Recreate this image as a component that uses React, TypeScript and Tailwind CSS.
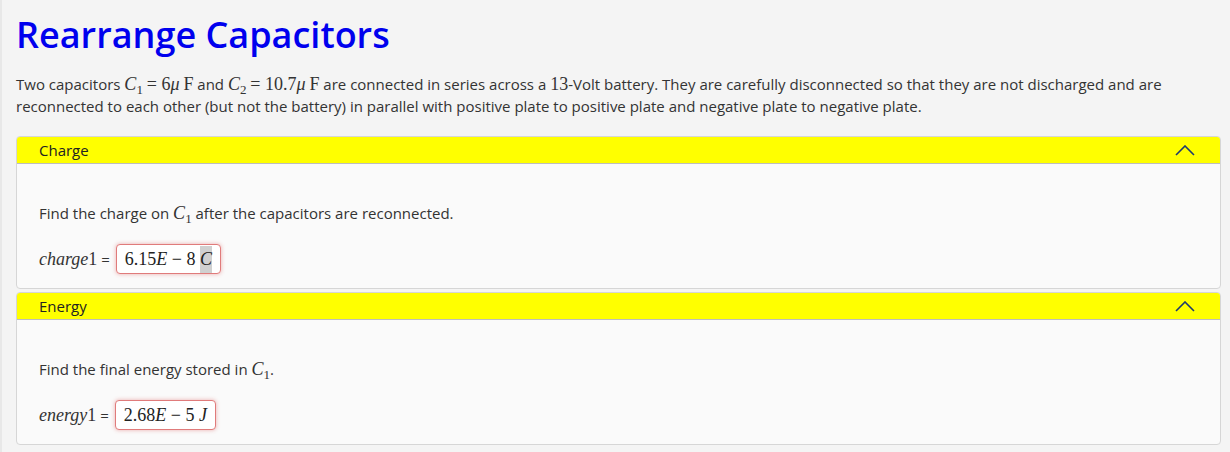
const sans = { fontFamily: '"Open Sans", "Noto Sans", sans-serif' };
const serif = "font-['Liberation_Serif','DejaVu_Serif',serif]";

function M({ children, italic }: { children: React.ReactNode; italic?: boolean }) {
  return <span className={`${serif} text-[18px] ${italic ? "italic" : ""}`}>{children}</span>;
}

function Sub({ children }: { children: React.ReactNode }) {
  return <span className={`${serif} text-[13px] relative top-[4px] leading-none`}>{children}</span>;
}

function Chevron() {
  return (
    <svg width="20" height="11" viewBox="0 0 20 11" className="text-[#1d3a6e]">
      <polyline points="1,10 10,1 19,10" fill="none" stroke="currentColor" strokeWidth="1.6" />
    </svg>
  );
}

function Section({
  title,
  question,
  label,
  answer,
}: {
  title: string;
  question: React.ReactNode;
  label: React.ReactNode;
  answer: React.ReactNode;
}) {
  return (
    <div className="rounded-[4px] border border-[#d6d6d6] bg-[#fafafa] overflow-hidden">
      <div className="h-[27px] bg-[#ffff00] border-b border-[#bdbdbd] flex items-center justify-between pl-[22px] pr-[25px]">
        <span className="text-[15px] text-[#222]">{title}</span>
        <Chevron />
      </div>
      <div className="pl-[22px] pt-[37px] pb-[14px]">
        <p className="text-[15px] text-[#333] leading-[24px]">{question}</p>
        <div className="mt-[19px] flex items-center gap-[6px] text-[15px] text-[#333]">
          <span>{label}</span>
          <div className="h-[30px] px-[8px] flex items-center rounded-[4px] border border-[#e07b7b] bg-white shadow-[0_0_4px_rgba(220,80,80,0.45)] text-[#222]">
            {answer}
          </div>
        </div>
      </div>
    </div>
  );
}

export default function App() {
  return (
    <div className="min-h-[452px] bg-[#f4f4f4] border-l-2 border-[#e8e8e8] pl-[14px] pr-[9px] pt-[12px]" style={sans}>
      <h1 className="text-[36px] leading-[46px] font-semibold text-[#0000ee]">Rearrange Capacitors</h1>
      <p className="mt-[15px] text-[15px] leading-[22px] text-[#333] pr-[40px]">
        Two capacitors <M italic>C</M>
        <Sub>1</Sub> <M>= 6</M>
        <M italic>μ</M> <M>F</M> and <M italic>C</M>
        <Sub>2</Sub> <M>= 10.7</M>
        <M italic>μ</M> <M>F</M> are connected in series across a <M>13</M>-Volt battery. They are carefully
        disconnected so that they are not discharged and are reconnected to each other (but not the battery) in
        parallel with positive plate to positive plate and negative plate to negative plate.
      </p>
      <div className="mt-[19px] flex flex-col gap-[3px]">
        <Section
          title="Charge"
          question={
            <>
              Find the charge on <M italic>C</M>
              <Sub>1</Sub> after the capacitors are reconnected.
            </>
          }
          label={
            <>
              <M italic>charge</M>
              <M>1</M> =
            </>
          }
          answer={
            <>
              <M>6.15</M>
              <M italic>E</M>
              <M>&nbsp;− 8&nbsp;</M>
              <span className="bg-[#d0d0d0]">
                <M italic>C</M>
              </span>
            </>
          }
        />
        <Section
          title="Energy"
          question={
            <>
              Find the final energy stored in <M italic>C</M>
              <Sub>1</Sub>.
            </>
          }
          label={
            <>
              <M italic>energy</M>
              <M>1</M> =
            </>
          }
          answer={
            <>
              <M>2.68</M>
              <M italic>E</M>
              <M>&nbsp;− 5&nbsp;</M>
              <M italic>J</M>
            </>
          }
        />
      </div>
    </div>
  );
}
